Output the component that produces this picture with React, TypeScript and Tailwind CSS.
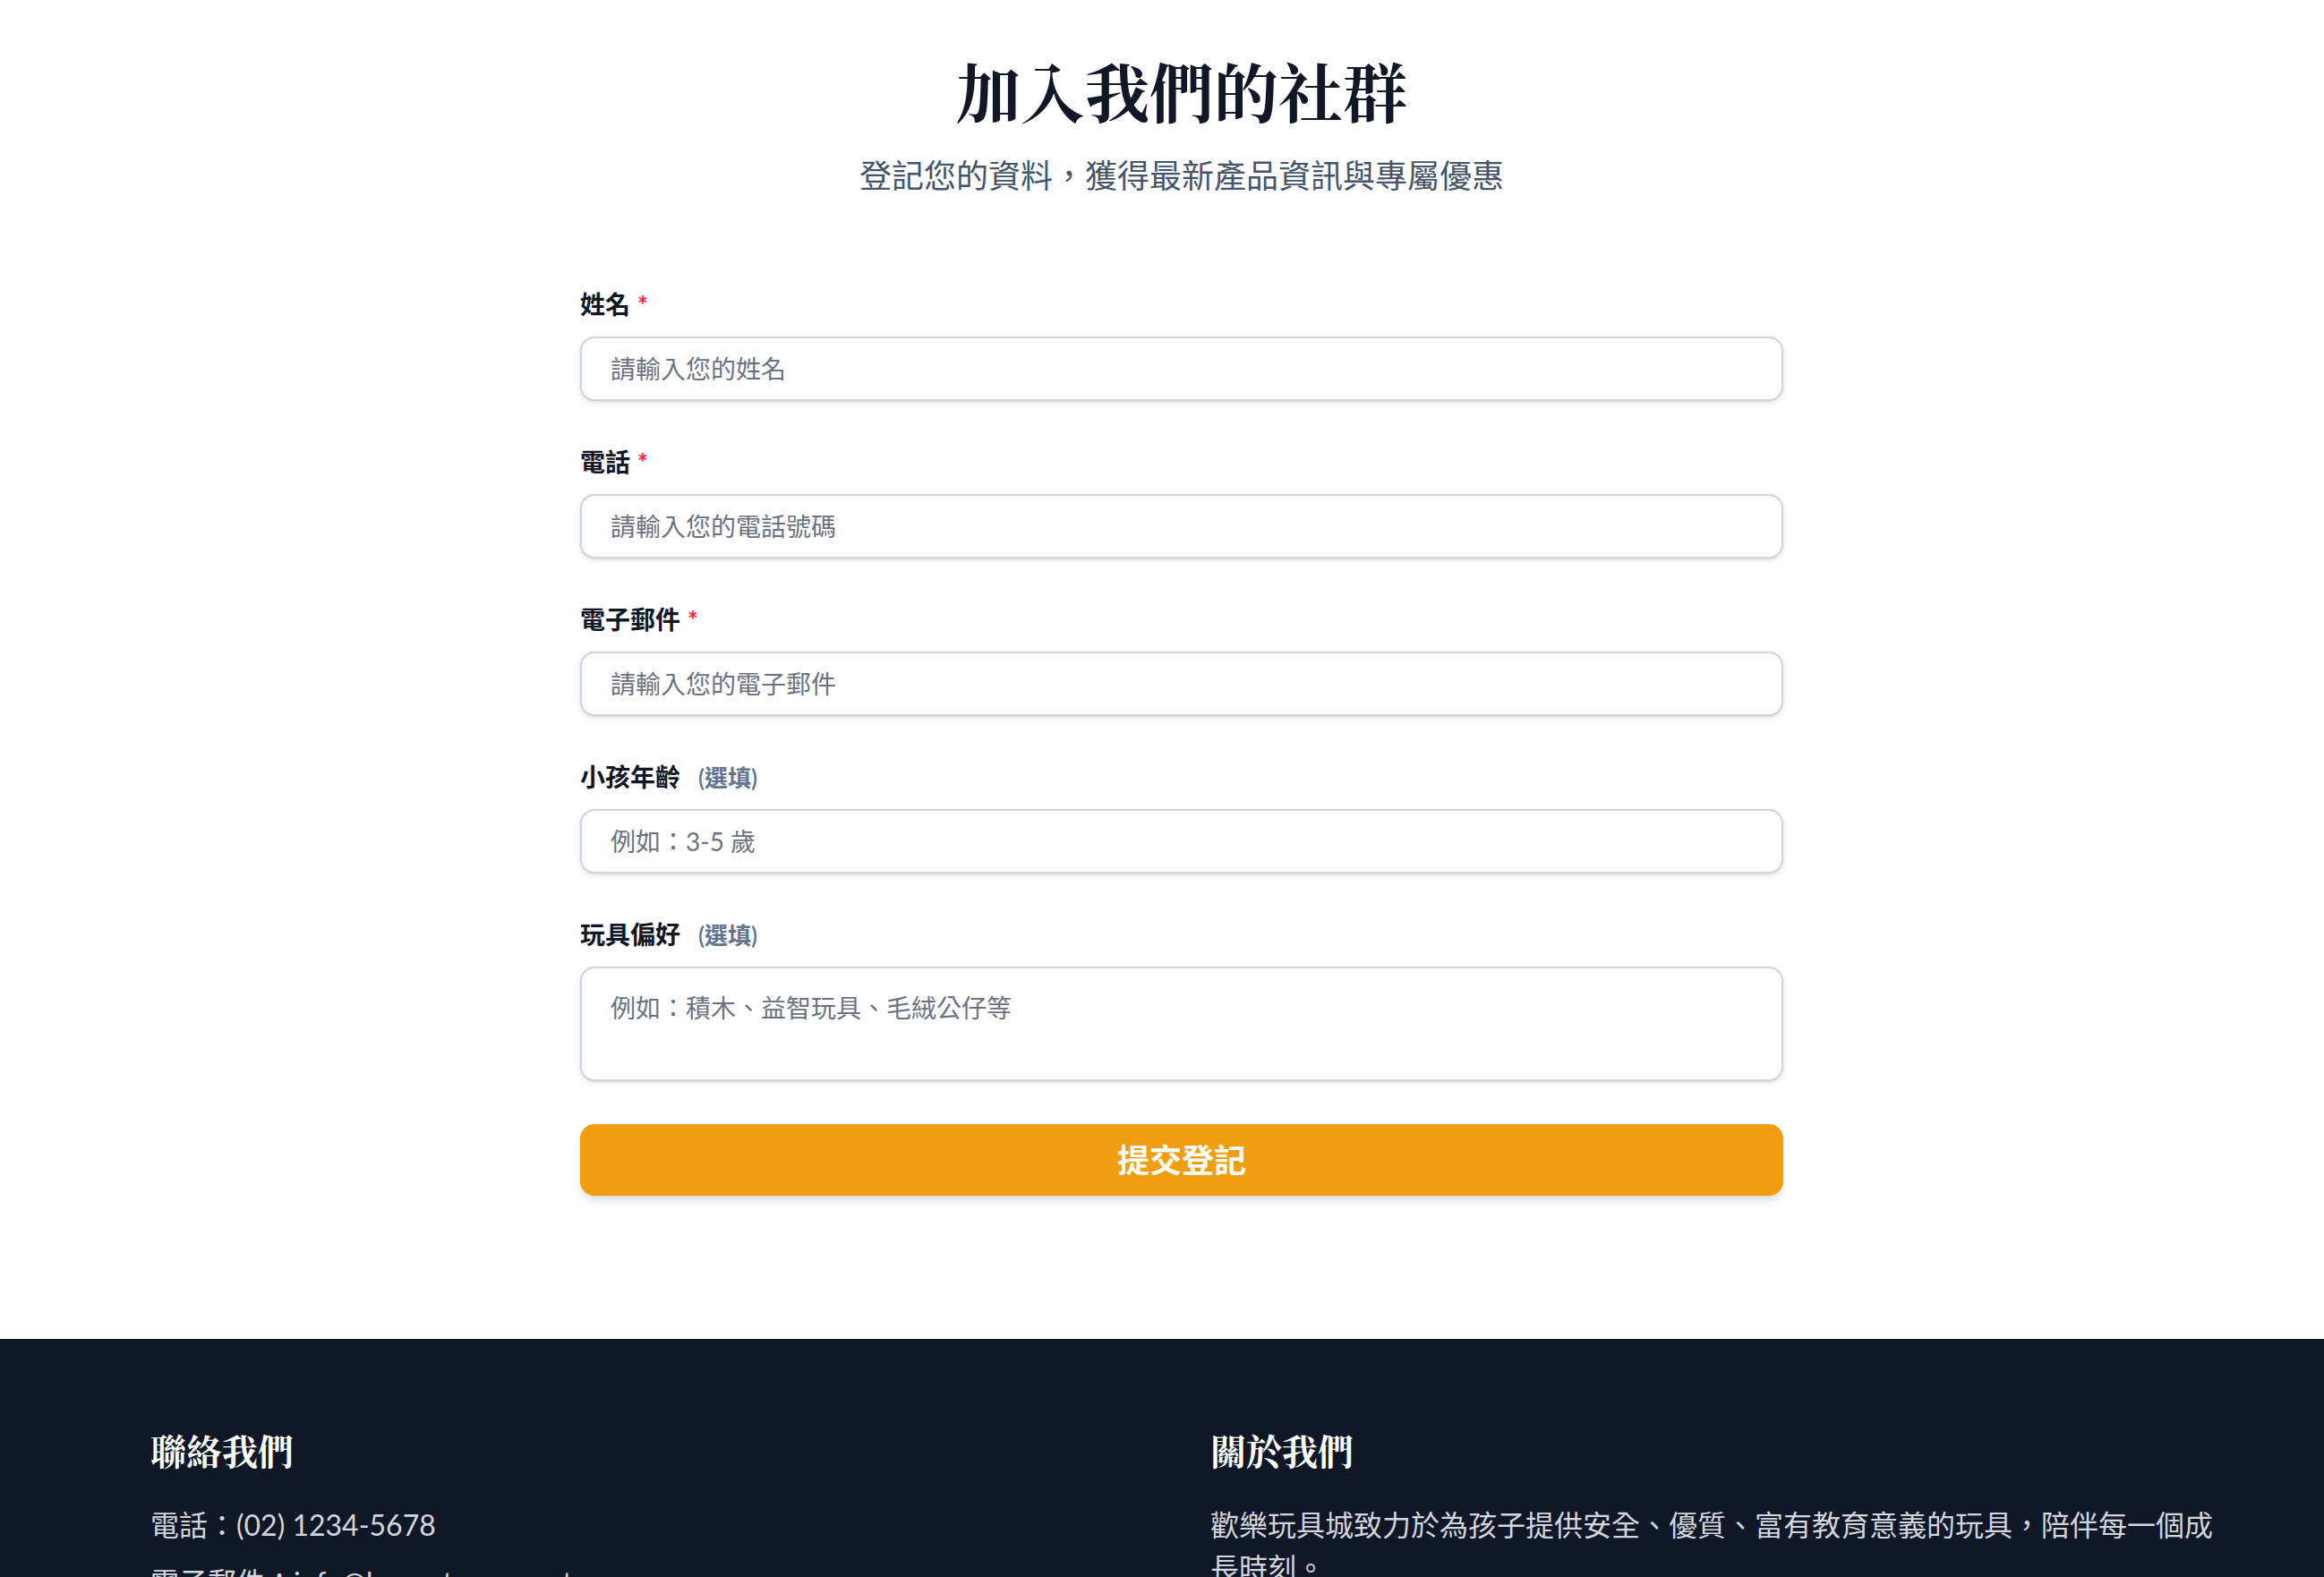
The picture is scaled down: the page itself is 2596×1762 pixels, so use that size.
import React from "react";

const sans = "font-['Lato','Noto_Sans_CJK_TC',sans-serif]";
const serif =
  "font-['Noto_Serif_CJK_TC','Noto_Serif_TC','AR_PL_UMing_TW','AR_PL_UMing_TW_MBE','AR_PL_New_Sung','WenQuanYi_Zen_Hei_Sharp','Liberation_Serif',serif]";

function Label({ text, required }: { text: string; required?: boolean }) {
  return (
    <label className="block mb-2 text-sm leading-5 font-bold text-gray-900">
      {text}
      {required ? (
        <span className="ml-1 text-red-500">*</span>
      ) : (
        <span className="ml-[10px] text-[13px] leading-4 font-semibold text-slate-500">(選填)</span>
      )}
    </label>
  );
}

const inputCls =
  "w-full h-9 px-4 rounded-lg border border-slate-300 bg-white text-sm text-gray-900 placeholder:text-gray-500 shadow-sm outline-none";

export default function App() {
  return (
    <div className={`[zoom:2] bg-white ${sans}`}>
      {/* Signup */}
      <section className="pl-[22px] pt-[30px] pb-20">
        <div className="max-w-2xl mx-auto">
          <div className="text-center mb-12">
            <h1 className={`mb-[14px] text-4xl leading-10 font-bold text-gray-900 ${serif}`}>加入我們的社群</h1>
            <p className="text-lg leading-7 text-slate-600">登記您的資料，獲得最新產品資訊與專屬優惠</p>
          </div>

          <form className="space-y-6" onSubmit={(e) => e.preventDefault()}>
            <div>
              <Label text="姓名" required />
              <input className={inputCls} placeholder="請輸入您的姓名" />
            </div>
            <div>
              <Label text="電話" required />
              <input className={inputCls} placeholder="請輸入您的電話號碼" />
            </div>
            <div>
              <Label text="電子郵件" required />
              <input className={inputCls} placeholder="請輸入您的電子郵件" />
            </div>
            <div>
              <Label text="小孩年齡" />
              <input className={inputCls} placeholder="例如：3-5 歲" />
            </div>
            <div>
              <Label text="玩具偏好" />
              <textarea
                className="block w-full h-16 px-4 py-3 rounded-lg border border-slate-300 bg-white text-sm leading-5 text-gray-900 placeholder:text-gray-500 shadow-sm outline-none resize-none"
                placeholder="例如：積木、益智玩具、毛絨公仔等"
              />
            </div>
            <button
              type="submit"
              className="w-full h-10 rounded-lg bg-[#f09e10] text-white text-lg leading-7 font-bold shadow-md"
            >
              提交登記
            </button>
          </form>
        </div>
      </section>

      {/* Footer */}
      <footer className="bg-gray-900 pl-[22px] py-12">
        <div className="max-w-6xl mx-auto grid grid-cols-2 gap-8">
          <div>
            <h3 className={`mb-4 text-xl leading-7 font-bold text-white ${serif}`}>聯絡我們</h3>
            <div className="space-y-2 text-base leading-6 text-gray-300">
              <p>電話：(02) 1234-5678</p>
              <p>電子郵件：info@happytoys.com.tw</p>
            </div>
          </div>
          <div>
            <h3 className={`mb-4 text-xl leading-7 font-bold text-white ${serif}`}>關於我們</h3>
            <p className="text-base leading-6 text-gray-300">
              歡樂玩具城致力於為孩子提供安全、優質、富有教育意義的玩具，陪伴每一個成長時刻。
            </p>
          </div>
        </div>
      </footer>
    </div>
  );
}
